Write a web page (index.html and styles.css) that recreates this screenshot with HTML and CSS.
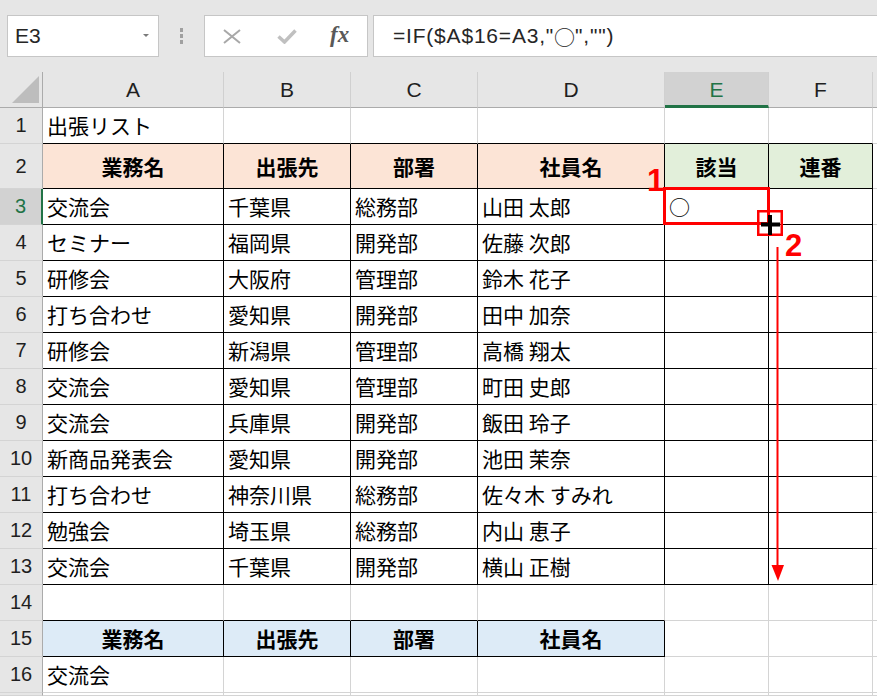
FILE: index.html
```html
<!DOCTYPE html>
<html lang="ja">
<head>
<meta charset="utf-8">
<title>出張リスト</title>
<link rel="stylesheet" href="styles.css">
</head>
<body>
<div class="topbar">
  <div class="namebox"><span class="nb-text">E3</span><span class="dd"></span></div>
  <div class="dots"><i></i><i></i><i></i></div>
  <div class="btns">
    <svg class="ic-x" width="18" height="15" viewBox="0 0 18 15"><path d="M1 1 L17 14 M17 1 L1 14" stroke="#a8a8a8" stroke-width="2" fill="none"/></svg>
    <svg class="ic-ok" width="20" height="15" viewBox="0 0 20 15"><path d="M1.5 7.5 L7.5 13 L18.5 1.5" stroke="#c0c0c0" stroke-width="3.5" fill="none"/></svg>
    <span class="fx">fx</span>
  </div>
  <div class="formula">=IF($A$16=A3,"<span class="cj">○</span>","")</div>
</div>

<div class="sheet">
  <!-- column headers -->
  <div class="corner"><span class="tri"></span></div>
  <div class="ch">A</div><div class="ch">B</div><div class="ch">C</div><div class="ch">D</div><div class="ch sel">E</div><div class="ch">F</div><div class="ch"></div>

  <!-- row 1 -->
  <div class="rh">1</div>
  <div class="c kb">出張リスト</div><div class="c kb"></div><div class="c kb"></div><div class="c kb"></div><div class="c kb"></div><div class="c kb"></div><div class="c"></div>

  <!-- row 2 -->
  <div class="rh">2</div>
  <div class="c k hd pe">業務名</div><div class="c k hd pe">出張先</div><div class="c k hd pe">部署</div><div class="c k hd pe">社員名</div><div class="c k hd gr">該当</div><div class="c k hd gr">連番</div><div class="c"></div>

  <div class="rh rsel">3</div>
  <div class="c k">交流会</div><div class="c k">千葉県</div><div class="c k">総務部</div><div class="c k">山田 太郎</div><div class="c k">○</div><div class="c k"></div><div class="c"></div>

  <div class="rh">4</div>
  <div class="c k">セミナー</div><div class="c k">福岡県</div><div class="c k">開発部</div><div class="c k">佐藤 次郎</div><div class="c k"></div><div class="c k"></div><div class="c"></div>

  <div class="rh">5</div>
  <div class="c k">研修会</div><div class="c k">大阪府</div><div class="c k">管理部</div><div class="c k">鈴木 花子</div><div class="c k"></div><div class="c k"></div><div class="c"></div>

  <div class="rh">6</div>
  <div class="c k">打ち合わせ</div><div class="c k">愛知県</div><div class="c k">開発部</div><div class="c k">田中 加奈</div><div class="c k"></div><div class="c k"></div><div class="c"></div>

  <div class="rh">7</div>
  <div class="c k">研修会</div><div class="c k">新潟県</div><div class="c k">管理部</div><div class="c k">高橋 翔太</div><div class="c k"></div><div class="c k"></div><div class="c"></div>

  <div class="rh">8</div>
  <div class="c k">交流会</div><div class="c k">愛知県</div><div class="c k">管理部</div><div class="c k">町田 史郎</div><div class="c k"></div><div class="c k"></div><div class="c"></div>

  <div class="rh">9</div>
  <div class="c k">交流会</div><div class="c k">兵庫県</div><div class="c k">開発部</div><div class="c k">飯田 玲子</div><div class="c k"></div><div class="c k"></div><div class="c"></div>

  <div class="rh">10</div>
  <div class="c k">新商品発表会</div><div class="c k">愛知県</div><div class="c k">開発部</div><div class="c k">池田 茉奈</div><div class="c k"></div><div class="c k"></div><div class="c"></div>

  <div class="rh">11</div>
  <div class="c k">打ち合わせ</div><div class="c k">神奈川県</div><div class="c k">総務部</div><div class="c k">佐々木 すみれ</div><div class="c k"></div><div class="c k"></div><div class="c"></div>

  <div class="rh">12</div>
  <div class="c k">勉強会</div><div class="c k">埼玉県</div><div class="c k">総務部</div><div class="c k">内山 恵子</div><div class="c k"></div><div class="c k"></div><div class="c"></div>

  <div class="rh">13</div>
  <div class="c k">交流会</div><div class="c k">千葉県</div><div class="c k">開発部</div><div class="c k">横山 正樹</div><div class="c k"></div><div class="c k"></div><div class="c"></div>

  <div class="rh">14</div>
  <div class="c kb"></div><div class="c kb"></div><div class="c kb"></div><div class="c kb"></div><div class="c"></div><div class="c"></div><div class="c"></div>

  <div class="rh">15</div>
  <div class="c k hd bl">業務名</div><div class="c k hd bl">出張先</div><div class="c k hd bl">部署</div><div class="c k hd bl">社員名</div><div class="c"></div><div class="c"></div><div class="c"></div>

  <div class="rh">16</div>
  <div class="c">交流会</div><div class="c"></div><div class="c"></div><div class="c"></div><div class="c"></div><div class="c"></div><div class="c"></div>

  <div class="rh"></div>
  <div class="c"></div><div class="c"></div><div class="c"></div><div class="c"></div><div class="c"></div><div class="c"></div><div class="c"></div>
</div>

<svg class="overlay" width="877" height="696" viewBox="0 0 877 696">
  <rect x="664.5" y="188.5" width="104" height="35" fill="none" stroke="#ff0000" stroke-width="3"/>
  <rect x="758.25" y="211.25" width="23.5" height="23.5" fill="none" stroke="#ff0000" stroke-width="2.5"/>
  <rect x="761" y="222.5" width="19" height="4" fill="#000"/>
  <rect x="768" y="215" width="4" height="20" fill="#000"/>
  <line x1="777.5" y1="247" x2="777.5" y2="567" stroke="#ff0000" stroke-width="2"/>
  <polygon points="771.5,565 784,565 778,581" fill="#ff0000"/>
  <text x="647" y="191" class="lbl">1</text>
  <text x="785" y="256" class="lbl">2</text>
</svg>
</body>
</html>
```

FILE: styles.css
```css
html, body {
  margin: 0;
  padding: 0;
}
body {
  width: 877px;
  height: 696px;
  overflow: hidden;
  position: relative;
  background: #fff;
  font-family: "Noto Sans CJK JP", sans-serif;
}

/* ---------- top bar ---------- */
.topbar {
  height: 72px;
  box-sizing: border-box;
  background: #e6e6e6;
  display: flex;
  align-items: flex-start;
  padding: 15px 0 0 7px;
  overflow: hidden;
}
.namebox {
  width: 152px;
  height: 42px;
  box-sizing: border-box;
  border: 1px solid #c6c6c6;
  background: #fff;
  display: flex;
  align-items: center;
  justify-content: space-between;
  padding: 0 9px 0 7px;
  flex: none;
}
.nb-text {
  font-family: "Liberation Sans", Arial, sans-serif;
  font-size: 21px;
  color: #262626;
}
.dd {
  width: 0;
  height: 0;
  border-left: 3.5px solid transparent;
  border-right: 3.5px solid transparent;
  border-top: 3.5px solid #7a7a7a;
  margin-top: -2px;
}
.dots {
  display: flex;
  flex-direction: column;
  gap: 2px;
  margin: 13px 0 0 21px;
  flex: none;
}
.dots i {
  display: block;
  width: 3px;
  height: 4px;
  background: #a0a0a0;
}
.btns {
  width: 164px;
  height: 42px;
  box-sizing: border-box;
  border: 1px solid #c6c6c6;
  background: #fff;
  margin-left: 21px;
  display: flex;
  align-items: center;
  padding-left: 18px;
  flex: none;
}
.ic-ok {
  margin-left: 36px;
}
.fx {
  margin-left: 33px;
  font-family: "Liberation Serif", serif;
  font-style: italic;
  font-weight: bold;
  font-size: 23px;
  color: #595959;
  margin-top: -2px;
}
.formula {
  margin-left: 5px;
  width: 520px;
  height: 42px;
  box-sizing: border-box;
  border: 1px solid #c6c6c6;
  border-right: none;
  background: #fff;
  display: flex;
  align-items: center;
  padding-left: 19px;
  font-family: "Liberation Sans", "Noto Sans CJK JP", sans-serif;
  font-size: 21px;
  letter-spacing: 0.8px;
  color: #262626;
  flex: none;
  white-space: nowrap;
}
.cj {
  font-family: "Noto Sans CJK JP", sans-serif;
  letter-spacing: 0;
}

/* ---------- sheet ---------- */
.sheet {
  display: grid;
  grid-template-columns: 43px 181px 127px 127px 187px 104px 104px 1fr;
  grid-template-rows: 36px 36px 45px repeat(14, 36px) 1fr;
  height: 624px;
}
.corner {
  background: #e6e6e6;
  border-right: 1px solid #ababab;
  border-bottom: 1px solid #ababab;
  position: relative;
}
.tri {
  position: absolute;
  left: 12px;
  top: 4px;
  width: 0;
  height: 0;
  border-left: 27px solid transparent;
  border-bottom: 27px solid #bdbdbd;
}
.ch {
  background: #e6e6e6;
  border-right: 1px solid #d0d0d0;
  border-bottom: 1px solid #ababab;
  display: flex;
  align-items: center;
  justify-content: center;
  font-family: "Liberation Sans", Arial, sans-serif;
  font-size: 21px;
  color: #1f1f1f;
}
.ch.sel {
  background: #d2d2d2;
  color: #217346;
  border-bottom: 3px solid #217346;
  padding-top: 2px;
}
.rh {
  background: #e6e6e6;
  border-right: 1px solid #ababab;
  border-bottom: 1px solid #d4d4d4;
  display: flex;
  align-items: center;
  justify-content: center;
  font-family: "Liberation Sans", Arial, sans-serif;
  font-size: 20px;
  color: #1f1f1f;
}
.rh.rsel {
  background: #d2d2d2;
  color: #217346;
  border-right: 2px solid #217346;
}
.c {
  border-right: 1px solid #d4d4d4;
  border-bottom: 1px solid #d4d4d4;
  display: flex;
  align-items: center;
  padding-left: 4px;
  font-size: 21px;
  line-height: 1;
  color: #000;
  white-space: nowrap;
  overflow: hidden;
}
.k {
  border-right-color: #000;
  border-bottom-color: #000;
}
.kb {
  border-bottom-color: #000;
}
.hd {
  font-weight: bold;
  justify-content: center;
  padding-left: 0;
}
.pe {
  background: #fce4d6;
}
.gr {
  background: #e2efda;
}
.bl {
  background: #ddebf7;
}

/* ---------- annotations ---------- */
.overlay {
  position: absolute;
  left: 0;
  top: 0;
  pointer-events: none;
}
.lbl {
  font-family: "Liberation Sans", Arial, sans-serif;
  font-weight: bold;
  font-size: 31px;
  fill: #ff0000;
}
```
